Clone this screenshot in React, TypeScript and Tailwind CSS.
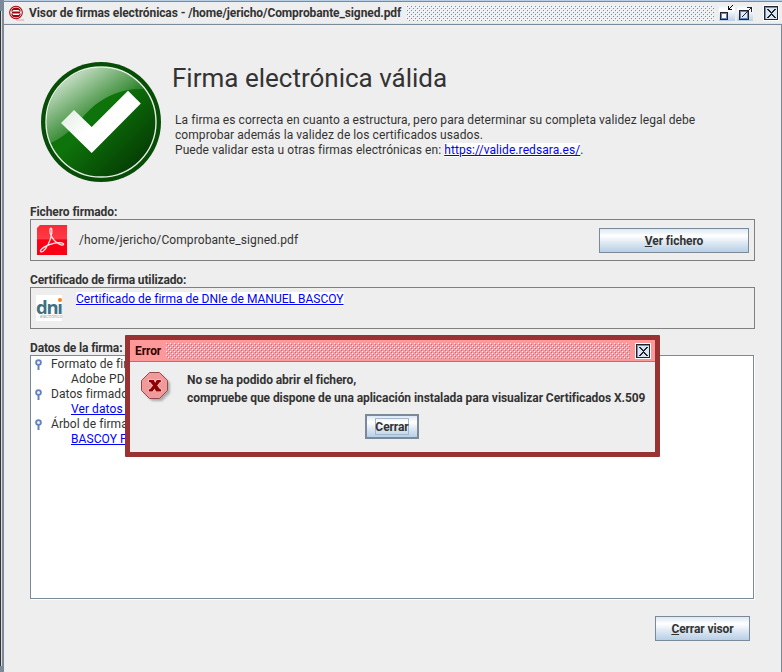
import React from 'react';

type BumpsProps = { id: string; width: number; height: number; dark: string; light: string };

function Bumps({ id, width, height, dark, light }: BumpsProps) {
  return (
    <svg width={width} height={height} shapeRendering="crispEdges" className="block shrink-0">
      <defs>
        <pattern id={id} width="4" height="4" patternUnits="userSpaceOnUse">
          <path fill={light} d="M0 0h1v1h-1zM2 2h1v1h-1z" />
          <path fill={dark} d="M1 1h1v1h-1zM3 3h1v1h-1z" />
        </pattern>
      </defs>
      <rect width={width} height={height} fill={`url(#${id})`} />
    </svg>
  );
}

function AppIcon() {
  return (
    <svg width="16" height="16" viewBox="0 0 16 16" className="block shrink-0">
      <path d="M7 15h8" stroke="#e3b5b8" strokeWidth="1.4" />
      <circle cx="7" cy="7.500" r="6.300" fill="#fff" stroke="#a3040c" strokeWidth="1.100" />
      <path d="M2.200 6.500C2.500 3.500 4.500 2.500 7 2.500s4.500 1 4.800 4zM2.200 8.500h9.600c-.3 3-2.300 4-4.800 4s-4.500-1-4.800-4z" fill="#a3040c" />
      <path d="M3 7.500h8" stroke="#a3040c" strokeWidth="1" />
      <path d="M3.800 5.500h6.400M3.800 9.500h6.400" stroke="#fff" strokeWidth="1" />
    </svg>
  );
}

function CloseIcon() {
  return (
    <svg width="16" height="16" viewBox="0 0 16 16" shapeRendering="crispEdges" className="block shrink-0">
      <rect width="16" height="16" fill="#fff" />
      <rect x="1" y="1" width="14" height="14" fill="#20242c" />
      <rect x="2" y="2" width="12" height="12" fill="#7a8eb5" />
      <rect x="3" y="3" width="11" height="11" fill="#dce6f2" />
      <path d="M4 4h2v1h1v1h1v1h1v-1h1v-1h1v-1h2v1h-1v1h-1v1h-1v1h-1v1h1v1h1v1h1v1h1v1h-2v-1h-1v-1h-1v-1h-1v1h-1v1h-1v1h-2v-1h1v-1h1v-1h1v-1h1v-1h-1v-1h-1v-1h-1v-1h-1z" fill="#20242c" />
    </svg>
  );
}

function MinimizeIcon() {
  return (
    <svg width="16" height="16" viewBox="0 0 16 16" shapeRendering="crispEdges" className="block shrink-0">
      <defs>
        <linearGradient id="min" x2="0" y2="1"><stop stopColor="#e7f0f8" /><stop offset=".3" stopColor="#fff" /><stop offset="1" stopColor="#b8cfe5" /></linearGradient>
      </defs>
      <rect width="16" height="16" fill="url(#min)" />
      <path d="M1 7h8v8h-8z" fill="#20242c" />
      <path d="M2 8h6v6h-6z" fill="#6382bf" />
      <path d="M3 9h4v4h-4z" fill="#fff" />
      <path d="M9 1h1v3h3v1h-4zM11 2h1v1h-1zM12 1h1v1h-1zM13 0h1v1h-1zM10 3h1v1h-1z" fill="#000" />
    </svg>
  );
}

function MaximizeIcon() {
  return (
    <svg width="16" height="16" viewBox="0 0 16 16" shapeRendering="crispEdges" className="block shrink-0">
      <defs>
        <linearGradient id="max" x2="0" y2="1"><stop stopColor="#e7f0f8" /><stop offset=".3" stopColor="#fff" /><stop offset="1" stopColor="#b8cfe5" /></linearGradient>
      </defs>
      <rect width="16" height="16" fill="url(#max)" />
      <path d="M2 5h10v10h-10z" fill="#20242c" />
      <path d="M3 6h8v8h-8z" fill="#6382bf" />
      <path d="M4 7h6v6h-6z" fill="#e3ecf6" />
      <path d="M5 11h1v1h-1zM6 10h1v1h-1zM7 9h1v1h-1zM8 8h1v1h-1zM9 7h1v1h-1zM10 6h1v1h-1zM11 5h1v1h-1zM12 4h1v1h-1zM13 3h1v1h-1zM10 2h5v5h-1v-4h-4z" fill="#20242c" />
    </svg>
  );
}

function CheckBadge() {
  return (
    <svg width="120" height="120" viewBox="0 0 120 120" className="block shrink-0">
      <defs>
        <linearGradient id="disc" x1=".2" y1=".2" x2=".85" y2=".85">
          <stop offset=".4" stopColor="#0e730a" />
          <stop offset="1" stopColor="#053f04" />
        </linearGradient>
        <linearGradient id="gloss" gradientUnits="userSpaceOnUse" x1="22" y1="16" x2="56" y2="66">
          <stop stopColor="#fff" stopOpacity=".78" />
          <stop offset="1" stopColor="#fff" stopOpacity="0.04" />
        </linearGradient>
        <linearGradient id="tick" gradientUnits="userSpaceOnUse" x1="24" y1="52" x2="44" y2="72">
          <stop stopColor="#e6efe6" />
          <stop offset="1" stopColor="#fff" />
        </linearGradient>
        <clipPath id="discClip"><circle cx="60" cy="60" r="54.500" /></clipPath>
      </defs>
      <circle cx="60" cy="60" r="60" fill="#084d07" />
      <circle cx="60" cy="60" r="55" fill="url(#disc)" stroke="#e2efe1" strokeWidth="1.400" />
      <path clipPath="url(#discClip)" d="M0 0h120V27H99C80 27 66 34 54 43 38 56 32 73 3 84z" fill="url(#gloss)" />
      <path d="M20 61L33 48 50.700 65 87 28.700 99.800 41.500 50.700 91z" fill="url(#tick)" />
    </svg>
  );
}

function PdfIcon() {
  return (
    <svg width="30" height="30" viewBox="0 0 30 30" className="block shrink-0">
      <defs>
        <linearGradient id="pdf" x2="0" y2="1"><stop stopColor="#fb2a35" /><stop offset=".45" stopColor="#ff3b47" /><stop offset=".5" stopColor="#fd0017" /><stop offset="1" stopColor="#fb0014" /></linearGradient>
      </defs>
      <path d="M3 0H30V30H0V3z" fill="url(#pdf)" />
      <path d="M13.300 3.500c1.400-1.300 2 1.500 1.300 5.500-.8 5.600-4.800 14.500-8.500 17.300-2 1.400-3.400.2-2.200-1.500 2.600-3.500 13.800-8 20.200-7 3.700.6 3 2.900 0 2.100-4.600-1.200-10-7-10.900-11.800-.4-2-.5-3.900.1-4.600z" fill="none" stroke="#ffe9e9" strokeWidth="1.300" />
    </svg>
  );
}

function DniLogo() {
  return (
    <div className="flex h-[26px] w-[26px] shrink-0 flex-col bg-white">
      <div className="relative h-[19px] font-['Open_Sans',sans-serif] text-[18.500px] leading-[23px] font-bold tracking-[-1.300px] text-[#3f7183]">
        dnı
        <span className="absolute top-[3px] left-[22px] h-[4px] w-[4px] rounded-full bg-[#f58220]" />
      </div>
      <div className="pl-1 text-[4.500px] leading-[5px] text-[#a8a8a8]">electrónico</div>
    </div>
  );
}

function NodeHandle() {
  return (
    <svg width="7" height="11" viewBox="0 0 7 11" className="block shrink-0">
      <circle cx="3.500" cy="3.500" r="2.400" fill="#e9eff8" stroke="#6382bf" strokeWidth="1.800" />
      <path d="M3.500 6v5" stroke="#6382bf" strokeWidth="2" />
    </svg>
  );
}

function ErrorIcon() {
  return (
    <svg width="32" height="32" viewBox="0 0 32 32" className="block shrink-0">
      <defs><filter id="blur"><feGaussianBlur stdDeviation="1.300" /></filter></defs>
      <path d="M11 3h10l8 8v10l-8 8h-10l-8-8v-10z" fill="#888" opacity=".65" filter="url(#blur)" />
      <path d="M8.500.500h10l8 8v10l-8 8h-10l-8-8v-10z" fill="#f19a9a" stroke="#94494c" />
      <path d="M8 8h4.700l1.500 2.800 1.600-2.800h4v2.200h-1l-2.600 3.300 2.900 3.800h1v2.200h-5l-1.600-2.800-2 2.800h-3.700v-2.200h1.200l3-3.800-2.700-3.300h-1.300z" fill="#8f0003" stroke="#fbdcdc" strokeWidth="1.200" paintOrder="stroke" />
    </svg>
  );
}

const buttonFill = 'bg-[linear-gradient(180deg,#dde8f3_0%,#ffffff_30%,#dde8f3_60%,#b8cfe5_100%)]';

function TreeNode({ title, link, children }: { title: string; link?: boolean; children: React.ReactNode }) {
  return (
    <div className="h-[30px]">
      <div className="flex h-[15px] items-center">
        <NodeHandle />
        <span className="ml-[9px]">{title}</span>
      </div>
      <div className="h-[15px] pl-9">
        {link ? <a className="text-[#0000ff] underline underline-offset-1">{children}</a> : children}
      </div>
    </div>
  );
}

function ErrorDialog() {
  return (
    <div className="absolute top-[335px] left-[125px] flex h-[122px] w-[535px] flex-col rounded-[1px] border-[5px] border-[#993333] bg-[#eeeeee] font-bold tracking-[-0.075px]">
      <div className="flex h-[22px] shrink-0 items-center border-b border-[#cc6666] bg-[#ff9999] pl-[5px] text-[#330000]">
        <span className="w-[31px] pt-[2px]">Error</span>
        <Bumps id="dialogBumps" width={464} height={16} dark="#8a86a8" light="#ffffff" />
        <span className="ml-[5px]"><CloseIcon /></span>
      </div>
      <div className="flex pt-[10px] pl-[11px]">
        <ErrorIcon />
        <div className="-mt-px ml-[14px] text-[12px] leading-[18px] whitespace-nowrap">
          <div>No se ha podido abrir el fichero,</div>
          <div>compruebe que dispone de una aplicación instalada para visualizar Certificados X.509</div>
        </div>
      </div>
      <div className={`mt-[7px] ml-[235px] flex h-[25px] w-[54px] items-center justify-center border-2 border-[#7a8a99] ${buttonFill}`}>
        <span className="flex h-[17px] w-[34px] items-center justify-center border border-[#a3b8cc] pt-px">Cerrar</span>
      </div>
    </div>
  );
}

export default function App() {
  return (
    <div className="relative flex h-[672px] w-[782px] overflow-hidden bg-[#eeeeee] font-[Roboto,'Liberation_Sans',sans-serif] text-[12px] leading-[15px] whitespace-nowrap text-[#333333]">
      <div className="flex w-1 shrink-0 flex-col bg-[#7a8a99]">
        <div className="mt-[11px] h-[655px] w-[2px] border-r border-[#dddddd] bg-[#33333a]" />
      </div>
      <div className="flex min-w-0 flex-1 flex-col">
        <header className="flex h-[25px] shrink-0 items-center border-t border-b border-t-[#b8cfe5] border-b-[#7a8a99] pt-px pl-[5px] shadow-[inset_0_1px_0_#7a8a99,inset_0_-1px_0_#dce6f0]">
          <AppIcon />
          <span className="ml-1 w-[377px] font-bold tracking-[-0.1px]">Visor de firmas electrónicas - /home/jericho/Comprobante_signed.pdf</span>
          <Bumps id="titleBumps" width={308} height={16} dark="#7a8a99" light="#ffffff" />
          <div className="ml-[5px] flex gap-[2px]">
            <MinimizeIcon />
            <MaximizeIcon />
            <span className="ml-[8px]"><CloseIcon /></span>
          </div>
        </header>
        <main className="flex flex-1 flex-col border-r border-[#7a8a99] pl-[26px]">
          <section className="flex h-[179px] pt-[37px] pl-[11px]">
            <CheckBadge />
            <div className="ml-[11px]">
              <h1 className="text-[26px] leading-[32px]">Firma electrónica válida</h1>
              <div className="mt-[19px] ml-[3px] tracking-[0.075px]">
                <div>La firma es correcta en cuanto a estructura, pero para determinar su completa validez legal debe</div>
                <div>comprobar además la validez de los certificados usados.</div>
                <div>Puede validar esta u otras firmas electrónicas en: <a className="bg-white text-[#0000ff] underline underline-offset-1">https://valide.redsara.es/</a>.</div>
              </div>
            </div>
          </section>
          <section className="h-[68px]">
            <h2 className="h-[15px] pt-px font-bold tracking-[-0.1px]">Fichero firmado:</h2>
            <div className="flex h-[42px] w-[725px] items-center border border-[#808080] pr-[5px] pl-[6px]">
              <PdfIcon />
              <span className="ml-3 tracking-[0.09px]">/home/jericho/Comprobante_signed.pdf</span>
              <button className={`ml-auto h-[25px] w-[150px] border border-[#7a8a99] pt-[2px] font-bold tracking-[-0.07px] ${buttonFill}`}><span className="underline underline-offset-1">V</span>er fichero</button>
            </div>
          </section>
          <section className="h-[68px]">
            <h2 className="h-[15px] pt-px font-bold tracking-[-0.14px]">Certificado de firma utilizado:</h2>
            <div className="flex h-[42px] w-[725px] border border-[#808080] pt-[3px] pl-[5px]">
              <div className="mt-1"><DniLogo /></div>
              <a className="mt-px ml-[14px] h-[14px] bg-white tracking-[0.015px] text-[#0000ff] underline underline-offset-1">Certificado de firma de DNIe de MANUEL BASCOY</a>
            </div>
          </section>
          <section>
            <h2 className="h-[15px] pt-px font-bold tracking-[-0.14px]">Datos de la firma:</h2>
            <div className="h-[244px] w-[724px] border border-[#7a8a99] bg-white pt-px pl-[4px] tracking-[0.08px] shadow-[1px_1px_0_#ffffff]">
              <TreeNode title="Formato de firma">Adobe PDF</TreeNode>
              <TreeNode title="Datos firmados" link>Ver datos firmados</TreeNode>
              <TreeNode title="Árbol de firmas" link>BASCOY PEREZ</TreeNode>
            </div>
          </section>
          <footer className="mt-[17px] mr-[31px] flex justify-end">
            <button className={`h-[25px] w-[95px] border border-[#7a8a99] pt-px font-bold tracking-[-0.09px] ${buttonFill}`}><span className="underline underline-offset-1">C</span>errar visor</button>
          </footer>
        </main>
      </div>
      <ErrorDialog />
    </div>
  );
}
